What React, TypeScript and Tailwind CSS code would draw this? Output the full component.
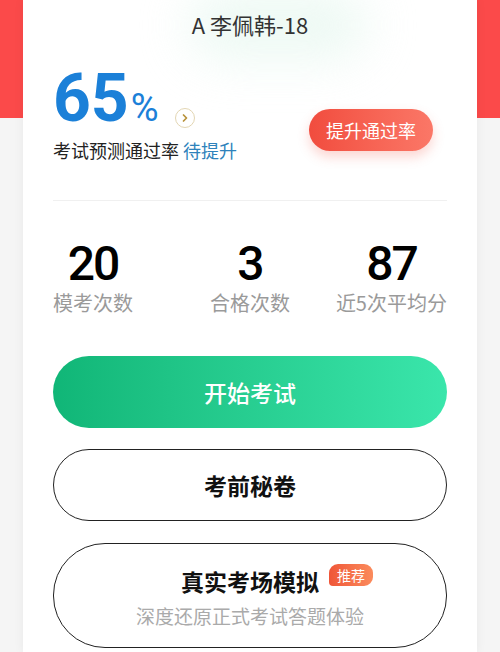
import { ChevronRight } from 'lucide-react'

const cjk = { fontFamily: '"Noto Sans CJK SC", "Noto Sans", sans-serif' }
const num = { fontFamily: 'Roboto, "Noto Sans", sans-serif' }

type Stat = { value: string; label: string; align: string }

const stats: Stat[] = [
  { value: '20', label: '模考次数', align: 'justify-self-start' },
  { value: '3', label: '合格次数', align: 'justify-self-center' },
  { value: '87', label: '近5次平均分', align: 'justify-self-end' },
]

export default function App() {
  return (
    <div
      className="h-[652px] w-[500px] overflow-hidden bg-[linear-gradient(to_bottom,#fb4a4a_118px,#f5f5f5_118px)]"
      style={cjk}
    >
      <div className="relative mx-[23px] h-full bg-white px-[30px] shadow-[0_0_10px_rgba(0,0,0,0.06)]">
        {/* faint mint glow behind the name */}
        <div className="pointer-events-none absolute left-[165px] top-[-10px] h-[70px] w-[180px] rounded-full bg-[#e6f7ef] opacity-70 blur-xl" />

        <div className="relative pt-[8px] text-center text-[22px] leading-[32px] text-[#333]">A 李佩韩-18</div>

        <div className="relative mt-[26px] flex items-start justify-between">
          <div>
            <div className="flex items-end">
              <span className="text-[66px] font-bold leading-[66px] text-[#1b80d8]" style={num}>
                65
              </span>
              <span className="mb-[2px] ml-[2px] text-[38px] leading-[44px] text-[#1b80d8]" style={num}>
                %
              </span>
              <span className="mb-[4px] ml-[16px] flex h-[20px] w-[20px] items-center justify-center rounded-full border border-[#e3d6b3]">
                <ChevronRight size={12} strokeWidth={3.5} className="text-[#b8923a]" />
              </span>
            </div>
            <div className="mt-[5px] text-[18px] leading-[26px] text-[#222]">
              考试预测通过率 <span className="text-[#2e82bb]">待提升</span>
            </div>
          </div>
          <button className="mr-[14px] mt-[43px] h-[42px] rounded-full bg-gradient-to-r from-[#f14c3e] to-[#fb7767] px-[17px] text-[18px] text-white shadow-[0_6px_12px_rgba(245,90,75,0.25)]">
            提升通过率
          </button>
        </div>

        <div className="mt-[37px] h-px bg-[#f0f0f0]" />

        <div className="mt-[39px] grid grid-cols-3">
          {stats.map((s) => (
            <div key={s.label} className={`flex flex-col items-center ${s.align}`}>
              <span className="text-[48px] font-medium leading-[48px] tracking-[-2px] text-black" style={num}>
                {s.value}
              </span>
              <span className="mt-[1px] text-[20px] leading-[28px] text-[#9a9a9a]">{s.label}</span>
            </div>
          ))}
        </div>

        <button className="mt-[39px] flex h-[72px] w-full items-center justify-center rounded-full bg-gradient-to-r from-[#10b677] to-[#3ae6ab] text-[23px] font-medium text-white">
          开始考试
        </button>

        <button className="mt-[21px] flex h-[72px] w-full items-center justify-center rounded-full border-[1.5px] border-[#222] text-[23px] font-bold text-[#111]">
          考前秘卷
        </button>

        <div className="mt-[22px] flex h-[105px] w-full flex-col items-center rounded-[52px] border-[1.5px] border-[#222] pt-[22px]">
          <span className="relative text-[23px] font-bold leading-[30px] text-[#111]">
            真实考场模拟
            <span className="absolute left-full top-[-2px] ml-[10px] flex h-[22px] w-[44px] items-center justify-center rounded-[9px] rounded-bl-[4px] bg-gradient-to-r from-[#ef5538] to-[#fb8b5c] text-[14px] font-normal leading-none text-white">
              推荐
            </span>
          </span>
          <span className="mt-[7px] text-[19px] leading-[26px] text-[#aaa]">深度还原正式考试答题体验</span>
        </div>
      </div>
    </div>
  )
}
